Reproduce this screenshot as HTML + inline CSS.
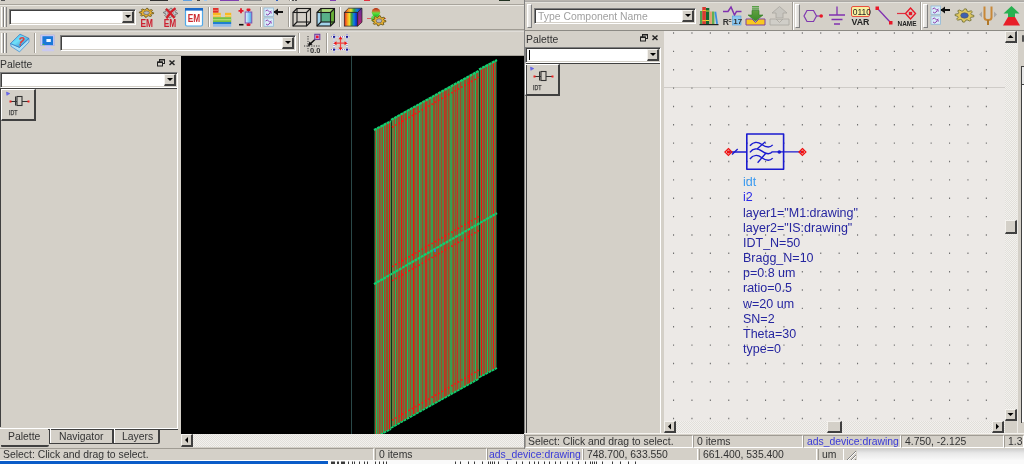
<!DOCTYPE html><html><head><meta charset="utf-8"><style>
html,body{margin:0;padding:0}
body{width:1024px;height:464px;overflow:hidden;position:relative;background:#d4d0c8;font-family:"Liberation Sans",sans-serif}
div{position:absolute;box-sizing:content-box}
.t{white-space:nowrap;line-height:1;will-change:transform}
.cb{background:#fff;border-top:1px solid #808080;border-left:1px solid #808080;border-bottom:1px solid #fff;border-right:1px solid #fff;box-shadow:inset 1px 1px 0 #404040, inset -1px -1px 0 #d4d0c8;padding:1px}
.rs{background:#d4d0c8;border-top:1px solid #f4f2ee;border-left:1px solid #f4f2ee;border-bottom:2px solid #404040;border-right:2px solid #404040}
.arr{width:0;height:0;border-left:3px solid transparent;border-right:3px solid transparent;border-top:3px solid #000}
.hd{width:1px;border-left:1px solid #fff;border-right:1px solid #808080;}
.hd::after{content:"";position:absolute;left:2px;top:0;width:1px;height:100%;border-left:1px solid #fff;border-right:1px solid #808080}
svg{position:absolute;overflow:visible}
.t,svg{will-change:transform}
.sf{border-top:1px solid #a09c94;border-left:1px solid #a09c94;border-bottom:1px solid #fff;border-right:1px solid #fff}
</style></head><body>

<div style="left:150px;top:0px;width:18px;height:1px;background:#303030"></div>
<div style="left:183px;top:0px;width:9px;height:1px;background:#60a0e0"></div>
<div style="left:197px;top:0px;width:3px;height:1px;background:#404040"></div>
<div style="left:204px;top:0px;width:3px;height:1px;background:#a0c8f0"></div>
<div style="left:220px;top:0px;width:19px;height:1px;background:#8040b0"></div>
<div style="left:244px;top:0px;width:18px;height:1px;background:#909090"></div>
<div style="left:276px;top:0px;width:2px;height:1px;background:#3060c0"></div>
<div style="left:289px;top:0px;width:1px;height:1px;background:#a09c94"></div>
<div style="left:290px;top:0px;width:1px;height:1px;background:#fff"></div>
<div style="left:292px;top:0px;width:2px;height:1px;background:#505050"></div>
<div style="left:295px;top:0px;width:2px;height:1px;background:#505050"></div>
<div style="left:330px;top:0px;width:6px;height:1px;background:#8040b0"></div>
<div style="left:364px;top:0px;width:6px;height:1px;background:#e03040"></div>
<div style="left:499px;top:0px;width:11px;height:1px;background:#203020"></div>
<div style="left:1px;top:0px;width:4px;height:1px;background:#555"></div>
<div style="left:0px;top:4px;width:857px;height:1px;background:#a8a49c"></div>
<div style="left:0px;top:5px;width:857px;height:1px;background:#eceae4"></div>
<div class="hd" style="left:1px;top:7px;height:20px"></div>
<div class="cb" style="left:9px;top:9px;width:123px;height:12px"></div>
<div class="rs" style="left:122px;top:11px;width:9px;height:9px"></div>
<div class="arr" style="left:125px;top:15px"></div>
<svg style="left:138px;top:7px" width="17" height="21" viewBox="0 0 17 21"><polygon points="15.70,5.80 15.56,6.67 13.29,7.03 12.81,7.59 13.59,8.96 12.50,9.51 10.48,8.77 9.51,8.95 8.50,10.26 7.10,10.18 6.52,8.77 5.62,8.47 3.41,8.96 2.51,8.28 3.71,7.03 3.42,6.43 1.30,5.80 1.44,4.93 3.71,4.57 4.19,4.01 3.41,2.64 4.50,2.09 6.52,2.83 7.49,2.65 8.50,1.34 9.90,1.42 10.48,2.83 11.38,3.13 13.59,2.64 14.49,3.32 13.29,4.57 13.58,5.17" fill="#e8b030" stroke="#5a4a10" stroke-width="0.8"/><ellipse cx="8.5" cy="5.8" rx="2.8800000000000003" ry="1.7856000000000003" fill="#b8b8c0" stroke="#555" stroke-width="0.6"/><text x="2.4" y="19.5" font-family="Liberation Sans" font-weight="bold" font-size="10" fill="#cc2030" textLength="12.5" lengthAdjust="spacingAndGlyphs">EM</text></svg>
<svg style="left:162px;top:7px" width="17" height="21" viewBox="0 0 17 21"><polygon points="15.50,6.00 15.37,6.93 13.16,7.31 12.69,7.90 13.45,9.37 12.39,9.96 10.43,9.17 9.48,9.36 8.50,10.76 7.13,10.67 6.57,9.17 5.70,8.85 3.55,9.37 2.68,8.64 3.84,7.31 3.56,6.67 1.50,6.00 1.63,5.07 3.84,4.69 4.31,4.10 3.55,2.63 4.61,2.04 6.57,2.83 7.52,2.64 8.50,1.24 9.87,1.33 10.43,2.83 11.30,3.15 13.45,2.63 14.32,3.36 13.16,4.69 13.44,5.33" fill="#c8c8cc" stroke="#666" stroke-width="0.8"/><ellipse cx="8.5" cy="6" rx="2.8000000000000003" ry="1.9040000000000004" fill="#e8e8e8" stroke="#555" stroke-width="0.6"/><path d="M4 1.8Q9 6 12.5 11M13.5 1.2Q8 5 4.5 11.5" stroke="#d0202a" stroke-width="2.2" fill="none"/><text x="1.8" y="19.5" font-family="Liberation Sans" font-weight="bold" font-size="10" fill="#cc2030" textLength="12.5" lengthAdjust="spacingAndGlyphs">EM</text></svg>
<svg style="left:184px;top:7px" width="20" height="21" viewBox="0 0 20 21"><rect x="1.5" y="1.5" width="17" height="17.5" rx="1.5" fill="#fff" stroke="#50a8e8" stroke-width="1.2"/><rect x="1" y="1" width="18" height="2.6" fill="#1868c8"/><text x="3.8" y="15.2" font-family="Liberation Sans" font-weight="bold" font-size="10.5" fill="#cc2a30" textLength="12.4" lengthAdjust="spacingAndGlyphs">EM</text></svg>
<svg style="left:213px;top:8px" width="19" height="19" viewBox="0 0 19 19"><rect x="0" y="0" width="5.5" height="4.8" fill="#e0302a"/><rect x="0" y="1.8" width="5.5" height="1.2" fill="#f06860"/><rect x="0" y="4.8" width="7.8" height="4.4" fill="#f8b820"/><rect x="12" y="4.8" width="6.2" height="4.4" fill="#f8b820"/><rect x="0" y="7" width="7.8" height="1.6" fill="#f8d070"/><rect x="12" y="7" width="6.2" height="1.6" fill="#f8d070"/><rect x="0" y="9.2" width="18.2" height="4.8" fill="#78c040"/><rect x="0" y="11" width="18.2" height="1.4" fill="#b0d870"/><rect x="0" y="14" width="18.2" height="2" fill="#2080d0"/><rect x="0" y="16" width="18.2" height="2.7" fill="#90b8e8"/></svg>
<svg style="left:237px;top:7px" width="17" height="21" viewBox="0 0 17 21"><path d="M1.5 3.8h5M4 1.3v5" stroke="#e0182a" stroke-width="1.8"/><path d="M2 17.7h4.5" stroke="#111" stroke-width="1.6"/><defs><linearGradient id="rg" x1="0" x2="1"><stop offset="0" stop-color="#e8f6ff"/><stop offset="1" stop-color="#40a8e8"/></linearGradient></defs><path d="M11.5 3v16" stroke="#8040a0" stroke-width="1"/><rect x="8.2" y="5" width="6.6" height="11" fill="url(#rg)" stroke="#8050b0" stroke-width="1"/><rect x="9.5" y="1.5" width="4" height="2.6" rx="1" fill="#e0182a"/><rect x="9.5" y="16.5" width="4" height="2.6" rx="1" fill="#e0182a"/></svg>
<svg style="left:263px;top:7px" width="21" height="21" viewBox="0 0 21 21"><rect x="1" y="1" width="9.5" height="8.3" fill="#d8ecf8" stroke="#90b8d8" stroke-width="0.8"/><path d="M2.5 4q2 -2 3 0t3 0M3 7q2 2 3 0t3 -1" stroke="#9040b0" stroke-width="1" fill="none"/><rect x="1" y="11" width="9.5" height="8.3" fill="#d8ecf8" stroke="#90b8d8" stroke-width="0.8"/><path d="M2.5 14q2 -2 3 0t3 0M3 17q2 2 3 0t3 -1" stroke="#9040b0" stroke-width="1" fill="none"/><path d="M11 5H20" stroke="#111" stroke-width="2"/><path d="M10.5 5L15 1.5V8.5Z" fill="#111"/></svg>
<svg style="left:291px;top:7px" width="21" height="21" viewBox="0 0 21 21"><g fill="none" stroke="#1a1a1a" stroke-width="1.1"><rect x="2" y="5.5" width="13.5" height="13.5"/><rect x="6" y="1.5" width="13.5" height="13.5"/><path d="M2 5.5L6 1.5M15.5 5.5L19.5 1.5M15.5 19L19.5 15M2 19L6 15"/></g></svg>
<svg style="left:315px;top:7px" width="21" height="21" viewBox="0 0 21 21"><rect x="6" y="1.5" width="13.5" height="13.5" fill="#80c850"/><path d="M2 5.5L6 1.5H19.5L15.5 5.5Z" fill="#a8d878"/><path d="M15.5 5.5L19.5 1.5V15L15.5 19Z" fill="#68b038"/><rect x="2" y="5.5" width="13.5" height="13.5" fill="#9cd4ee" opacity="0.9"/><rect x="6" y="5.5" width="9.5" height="9.5" fill="#58b088"/><g fill="none" stroke="#1a1a1a" stroke-width="1.1"><rect x="2" y="5.5" width="13.5" height="13.5"/><rect x="6" y="1.5" width="13.5" height="13.5"/><path d="M2 5.5L6 1.5M15.5 5.5L19.5 1.5M15.5 19L19.5 15M2 19L6 15"/></g></svg>
<svg style="left:343px;top:7px" width="21" height="21" viewBox="0 0 21 21"><defs><linearGradient id="rb" x1="0" x2="1"><stop offset="0" stop-color="#e02020"/><stop offset="0.2" stop-color="#f89020"/><stop offset="0.38" stop-color="#f0e030"/><stop offset="0.55" stop-color="#30a040"/><stop offset="0.72" stop-color="#1080e0"/><stop offset="0.9" stop-color="#1030d0"/><stop offset="1" stop-color="#2a2a80"/></linearGradient><linearGradient id="pm" x1="0" y1="0" x2="0" y2="1"><stop offset="0" stop-color="#6030a0"/><stop offset="1" stop-color="#c02070"/></linearGradient></defs><path d="M1.3 5.4L5.6 1.2H19L14.7 5.4Z" fill="url(#rb)" stroke="#222" stroke-width="0.7"/><rect x="1.3" y="5.4" width="13.4" height="13.7" fill="url(#rb)" stroke="#222" stroke-width="0.7"/><path d="M14.7 5.4L19 1.2V15.2L14.7 19.1Z" fill="url(#pm)" stroke="#222" stroke-width="0.7"/></svg>
<svg style="left:366px;top:7px" width="21" height="21" viewBox="0 0 21 21"><defs><linearGradient id="bl" x1="0" y1="0" x2="0" y2="1"><stop offset="0" stop-color="#b02810"/><stop offset="0.35" stop-color="#d07030"/><stop offset="0.6" stop-color="#60e040"/><stop offset="1" stop-color="#20c020"/></linearGradient></defs><path d="M1 11.5H20" stroke="#e04040" stroke-width="0.8"/><ellipse cx="9.5" cy="11.5" rx="4.5" ry="3.5" fill="#40e040" opacity="0.8"/><circle cx="10" cy="5.2" r="4.2" fill="url(#bl)"/><polygon points="20.00,13.80 19.87,14.78 17.66,15.19 17.19,15.82 17.95,17.36 16.89,17.99 14.93,17.15 13.98,17.36 13.00,18.84 11.63,18.74 11.07,17.15 10.20,16.82 8.05,17.36 7.18,16.60 8.34,15.19 8.06,14.51 6.00,13.80 6.13,12.82 8.34,12.41 8.81,11.78 8.05,10.24 9.11,9.61 11.07,10.45 12.02,10.24 13.00,8.76 14.37,8.86 14.93,10.45 15.80,10.78 17.95,10.24 18.82,11.00 17.66,12.41 17.94,13.09" fill="#e8b030" stroke="#5a4a10" stroke-width="0.8"/><ellipse cx="13" cy="13.8" rx="2.8000000000000003" ry="2.016" fill="#b8b8c0" stroke="#555" stroke-width="0.6"/></svg>
<div style="left:208px;top:7px;width:1px;height:20px;background:#a09c94"></div>
<div style="left:209px;top:7px;width:1px;height:20px;background:#fff"></div>
<div style="left:260px;top:7px;width:1px;height:20px;background:#a09c94"></div>
<div style="left:261px;top:7px;width:1px;height:20px;background:#fff"></div>
<div style="left:288px;top:7px;width:1px;height:20px;background:#a09c94"></div>
<div style="left:289px;top:7px;width:1px;height:20px;background:#fff"></div>
<div style="left:339px;top:7px;width:1px;height:20px;background:#a09c94"></div>
<div style="left:340px;top:7px;width:1px;height:20px;background:#fff"></div>
<div style="left:0px;top:29px;width:524px;height:1px;background:#a09c94"></div>
<div style="left:0px;top:30px;width:524px;height:1px;background:#c8c6c0"></div>
<div style="left:0px;top:31px;width:524px;height:1px;background:#e0ddd8"></div>
<div class="hd" style="left:1px;top:33px;height:20px"></div>
<div style="left:34px;top:33px;width:1px;height:20px;background:#a09c94"></div>
<div style="left:35px;top:33px;width:1px;height:20px;background:#fff"></div>
<div class="cb" style="left:60px;top:35px;width:232px;height:12px"></div>
<div class="rs" style="left:282px;top:37px;width:9px;height:9px"></div>
<div class="arr" style="left:285px;top:41px"></div>
<svg style="left:9px;top:33px" width="22" height="21" viewBox="0 0 22 21"><defs><linearGradient id="bk" x1="0" y1="0" x2="1" y2="1"><stop offset="0" stop-color="#40b8f0"/><stop offset="0.45" stop-color="#70e0f8"/><stop offset="1" stop-color="#1a68c0"/></linearGradient></defs><path d="M1.5 10.5L2 13.3L10.5 18.9L20 9L20 5.4L10.5 14.4Z" fill="#b0e0f4" stroke="#3a88d0" stroke-width="0.7"/><path d="M1.5 10.5L11 1.2L20 5.4L10.5 14.4Z" fill="url(#bk)" stroke="#2a70c0" stroke-width="0.7"/><path d="M10.5 6.5q1.5 -2.5 3.8 -1.5q1.6 1.2 -1 3q-1.6 1 -1.9 2.5" stroke="#e04040" stroke-width="1.6" fill="none"/><circle cx="11.2" cy="11.8" r="0.9" fill="#e04040"/></svg>
<svg style="left:40px;top:33px" width="17" height="21" viewBox="0 0 17 21"><rect x="0.8" y="2" width="13.4" height="10.7" fill="#d0d0f8" stroke="#a8a8e0" stroke-width="0.6"/><rect x="2.4" y="3.2" width="10.7" height="8.9" fill="#1a78d8"/><rect x="6.4" y="6" width="4.4" height="3" fill="#f0f8ff"/><rect x="2.6" y="11" width="1.6" height="1" fill="#40c040"/><path d="M5.2 12.7h5.6v2.8h-5.6z" fill="#c8c8f0"/><rect x="1.9" y="16" width="12.3" height="2.3" rx="1" fill="#c8c8f0"/></svg>
<svg style="left:303px;top:33px" width="19" height="21" viewBox="0 0 19 21"><path d="M5 3v16" stroke="#333" stroke-width="1" stroke-dasharray="1.2 1.2"/><path d="M1 13h16" stroke="#333" stroke-width="1" stroke-dasharray="1.2 1.2"/><path d="M6 12L13 5.5" stroke="#111" stroke-width="1.6"/><path d="M5 13L6.5 8.5L9.5 11.5Z" fill="#111"/><rect x="11.8" y="1.3" width="5" height="5.2" fill="#c8b8e0" stroke="#7040a0" stroke-width="1.1"/><rect x="13" y="2.6" width="2.6" height="2.6" fill="#f01830"/><text x="7" y="19.5" font-family="Liberation Sans" font-weight="bold" font-size="7.5" fill="#333">0.0</text></svg>
<svg style="left:330px;top:33px" width="21" height="21" viewBox="0 0 21 21"><g stroke="#fff" stroke-width="1.2"><path d="M1 3.8h19M1 16.6h19M4 1v19M17 1v19"/></g><g stroke="#5050c8" stroke-width="0.9" stroke-dasharray="1 1.2"><path d="M1 3.8h19M1 16.6h19M4 1v19M17 1v19"/></g><g fill="#1a1a90"><rect x="3" y="2.8" width="2" height="2"/><rect x="16" y="2.8" width="2" height="2"/><rect x="3" y="15.6" width="2" height="2"/><rect x="16" y="15.6" width="2" height="2"/></g><path d="M10.5 5v11M5 10.2h11" stroke="#f04040" stroke-width="1.2"/><path d="M10.5 3.2L8.5 6.2H12.5Z M10.5 17.5L8.5 14.5H12.5Z M3.5 10.2L6.5 8.2V12.2Z M17.5 10.2L14.5 8.2V12.2Z" fill="#f01818"/></svg>
<div style="left:298px;top:33px;width:1px;height:20px;background:#a09c94"></div>
<div style="left:299px;top:33px;width:1px;height:20px;background:#fff"></div>
<div style="left:326px;top:33px;width:1px;height:20px;background:#a09c94"></div>
<div style="left:327px;top:33px;width:1px;height:20px;background:#fff"></div>
<div style="left:0px;top:55px;width:524px;height:1px;background:#a8a49c"></div>
<div class="t" style="left:0.40px;top:59.70px;font-size:10.4px;color:#333;">Palette</div>
<svg style="left:156px;top:58px" width="10" height="9" viewBox="0 0 10 9"><rect x="3.5" y="1.5" width="5" height="4" fill="none" stroke="#222" stroke-width="1"/><rect x="3.5" y="1" width="5" height="1.5" fill="#222"/><rect x="1.5" y="4" width="5" height="4" fill="#d4d0c8" stroke="#222" stroke-width="1"/><rect x="1.5" y="3.5" width="5" height="1.5" fill="#222"/></svg>
<svg style="left:168px;top:59px" width="8" height="7" viewBox="0 0 8 7"><path d="M1.5 1.5L6.5 6M6.5 1.5L1.5 6" stroke="#222" stroke-width="1.5"/></svg>
<div class="cb" style="left:0px;top:72px;width:174px;height:12px"></div>
<div class="rs" style="left:164px;top:74px;width:9px;height:9px"></div>
<div class="arr" style="left:167px;top:78px"></div>
<div style="left:0px;top:88px;width:177px;height:1px;background:#404040"></div>
<div style="left:0px;top:88px;width:1px;height:339px;background:#404040"></div>
<div style="left:177px;top:88px;width:1px;height:341px;background:#fff"></div>
<div style="left:0px;top:428px;width:178px;height:1px;background:#fff"></div>
<div style="left:1px;top:89px;width:32px;height:29px;border-top:1px solid #fff;border-left:1px solid #fff;border-right:2px solid #404040;border-bottom:2px solid #404040"></div>
<svg style="left:1px;top:89px" width="35" height="31" viewBox="0 0 35 31"><path d="M5.5 3L8.8 4.6L5.8 6.3Z" fill="#6a6af0" stroke="#5050e0" stroke-width="0.5"/><path d="M10 12.5H27" stroke="#333" stroke-width="1"/><rect x="14" y="7.5" width="1.2" height="9" fill="#333"/><rect x="16" y="7.5" width="5" height="9" fill="#d4d0c8" stroke="#333" stroke-width="1.1"/><rect x="8.5" y="11.5" width="2" height="2" fill="#f02020"/><rect x="26.5" y="11.5" width="2" height="2" fill="#f02020"/><text x="8" y="25.5" font-family="Liberation Sans" font-size="7.4" fill="#333" stroke="#333" stroke-width="0.25" textLength="8.5" lengthAdjust="spacingAndGlyphs">IDT</text></svg>
<div style="left:0px;top:428px;width:178px;height:1px;background:#fff"></div>
<div style="left:48px;top:429px;width:130px;height:1px;background:#404040"></div>
<div style="left:1px;top:429px;width:48px;height:16px;border-bottom:2px solid #404040;border-bottom-right-radius:2px;border-bottom-left-radius:1px"></div>
<div class="t" style="left:8.40px;top:432.40px;font-size:10.4px;color:#333;">Palette</div>
<div style="left:49px;top:429px;width:62px;height:14px;border:1px solid #404040;border-top:0;border-right-width:2px;border-bottom-width:1px;border-bottom-right-radius:2px;box-shadow:inset 1px 0 0 #fff"></div>
<div class="t" style="left:59.00px;top:432.40px;font-size:10.4px;color:#333;">Navigator</div>
<div style="left:113px;top:429px;width:44px;height:14px;border:1px solid #404040;border-top:0;border-right-width:2px;border-bottom-width:1px;border-bottom-right-radius:2px;box-shadow:inset 1px 0 0 #fff"></div>
<div class="t" style="left:121.70px;top:432.40px;font-size:10.4px;color:#333;">Layers</div>
<div style="left:181px;top:56px;width:343px;height:378px;background:#000"></div>
<div style="left:351px;top:56px;width:1px;height:378px;background:#2a4848"></div>
<svg style="left:181px;top:56px" width="343" height="378" viewBox="181 56 343 378">
<defs><clipPath id="pg"><polygon points="374,129.7 391,120.8 391,119.6 479,70.4 479,69.2 497,59.8 497,367.8 479,377.2 479,378.4 391,427.6 391,428.8 374,437.7"/></clipPath></defs>
<g clip-path="url(#pg)">
<rect x="374" y="56" width="1" height="378" fill="#0a5030"/>
<rect x="375" y="56" width="1" height="378" fill="#a04a28"/>
<rect x="376" y="56" width="1" height="378" fill="#14c060"/>
<rect x="377" y="56" width="1" height="378" fill="#7a6a38"/>
<rect x="378" y="56" width="1" height="378" fill="#5a8045"/>
<rect x="379" y="56" width="1" height="378" fill="#a04a28"/>
<rect x="380" y="56" width="1" height="378" fill="#7a6a38"/>
<rect x="381" y="56" width="1" height="378" fill="#5a8045"/>
<rect x="382" y="56" width="1" height="378" fill="#a04a28"/>
<rect x="383" y="56" width="1" height="378" fill="#14c060"/>
<rect x="384" y="56" width="1" height="378" fill="#a04a28"/>
<rect x="385" y="56" width="1" height="378" fill="#5a8045"/>
<rect x="386" y="56" width="1" height="378" fill="#a04a28"/>
<rect x="387" y="56" width="1" height="378" fill="#a04a28"/>
<rect x="388" y="56" width="1" height="378" fill="#5a8045"/>
<rect x="389" y="56" width="1" height="378" fill="#f01010"/>
<rect x="390" y="56" width="1" height="378" fill="#5a8045"/>
<rect x="391" y="56" width="1" height="378" fill="#003a18"/>
<rect x="392" y="56" width="1" height="378" fill="#6a7a40"/>
<rect x="393" y="56" width="1" height="378" fill="#6a7a40"/>
<rect x="394" y="56" width="1" height="378" fill="#a04a28"/>
<rect x="395" y="56" width="1" height="378" fill="#14c060"/>
<rect x="396" y="56" width="1" height="378" fill="#a04a28"/>
<rect x="397" y="56" width="1" height="378" fill="#5a8045"/>
<rect x="398" y="56" width="1" height="378" fill="#a04a28"/>
<rect x="399" y="56" width="1" height="378" fill="#a04a28"/>
<rect x="400" y="56" width="1" height="378" fill="#5a8045"/>
<rect x="401" y="56" width="1" height="378" fill="#f01010"/>
<rect x="402" y="56" width="1" height="378" fill="#7a6a38"/>
<rect x="403" y="56" width="1" height="378" fill="#a04a28"/>
<rect x="404" y="56" width="1" height="378" fill="#5a8045"/>
<rect x="405" y="56" width="1" height="378" fill="#a04a28"/>
<rect x="406" y="56" width="1" height="378" fill="#a04a28"/>
<rect x="407" y="56" width="1" height="378" fill="#14c060"/>
<rect x="408" y="56" width="1" height="378" fill="#7a6a38"/>
<rect x="409" y="56" width="1" height="378" fill="#5a8045"/>
<rect x="410" y="56" width="1" height="378" fill="#a04a28"/>
<rect x="411" y="56" width="1" height="378" fill="#5a8045"/>
<rect x="412" y="56" width="1" height="378" fill="#5a8045"/>
<rect x="413" y="56" width="1" height="378" fill="#f01010"/>
<rect x="414" y="56" width="1" height="378" fill="#a04a28"/>
<rect x="415" y="56" width="1" height="378" fill="#7a6a38"/>
<rect x="416" y="56" width="1" height="378" fill="#5a8045"/>
<rect x="417" y="56" width="1" height="378" fill="#a04a28"/>
<rect x="418" y="56" width="1" height="378" fill="#a04a28"/>
<rect x="419" y="56" width="1" height="378" fill="#14c060"/>
<rect x="420" y="56" width="1" height="378" fill="#5a8045"/>
<rect x="421" y="56" width="1" height="378" fill="#5a8045"/>
<rect x="422" y="56" width="1" height="378" fill="#a04a28"/>
<rect x="423" y="56" width="1" height="378" fill="#5a8045"/>
<rect x="424" y="56" width="1" height="378" fill="#5a8045"/>
<rect x="425" y="56" width="1" height="378" fill="#c83020"/>
<rect x="426" y="56" width="1" height="378" fill="#c83020"/>
<rect x="427" y="56" width="1" height="378" fill="#7a6a38"/>
<rect x="428" y="56" width="1" height="378" fill="#5a8045"/>
<rect x="429" y="56" width="1" height="378" fill="#a04a28"/>
<rect x="430" y="56" width="1" height="378" fill="#7a6a38"/>
<rect x="431" y="56" width="1" height="378" fill="#34a050"/>
<rect x="432" y="56" width="1" height="378" fill="#34a050"/>
<rect x="433" y="56" width="1" height="378" fill="#a04a28"/>
<rect x="434" y="56" width="1" height="378" fill="#a04a28"/>
<rect x="435" y="56" width="1" height="378" fill="#5a8045"/>
<rect x="436" y="56" width="1" height="378" fill="#a04a28"/>
<rect x="437" y="56" width="1" height="378" fill="#7a6a38"/>
<rect x="438" y="56" width="1" height="378" fill="#c83020"/>
<rect x="439" y="56" width="1" height="378" fill="#5a8045"/>
<rect x="440" y="56" width="1" height="378" fill="#5a8045"/>
<rect x="441" y="56" width="1" height="378" fill="#a04a28"/>
<rect x="442" y="56" width="1" height="378" fill="#5a8045"/>
<rect x="443" y="56" width="1" height="378" fill="#5a8045"/>
<rect x="444" y="56" width="1" height="378" fill="#c83020"/>
<rect x="445" y="56" width="1" height="378" fill="#a04a28"/>
<rect x="446" y="56" width="1" height="378" fill="#a04a28"/>
<rect x="447" y="56" width="1" height="378" fill="#5a8045"/>
<rect x="448" y="56" width="1" height="378" fill="#a04a28"/>
<rect x="449" y="56" width="1" height="378" fill="#7a6a38"/>
<rect x="450" y="56" width="1" height="378" fill="#34a050"/>
<rect x="451" y="56" width="1" height="378" fill="#34a050"/>
<rect x="452" y="56" width="1" height="378" fill="#7a6a38"/>
<rect x="453" y="56" width="1" height="378" fill="#a04a28"/>
<rect x="454" y="56" width="1" height="378" fill="#5a8045"/>
<rect x="455" y="56" width="1" height="378" fill="#a04a28"/>
<rect x="456" y="56" width="1" height="378" fill="#7a6a38"/>
<rect x="457" y="56" width="1" height="378" fill="#c83020"/>
<rect x="458" y="56" width="1" height="378" fill="#5a8045"/>
<rect x="459" y="56" width="1" height="378" fill="#5a8045"/>
<rect x="460" y="56" width="1" height="378" fill="#a04a28"/>
<rect x="461" y="56" width="1" height="378" fill="#5a8045"/>
<rect x="462" y="56" width="1" height="378" fill="#5a8045"/>
<rect x="463" y="56" width="1" height="378" fill="#34a050"/>
<rect x="464" y="56" width="1" height="378" fill="#a04a28"/>
<rect x="465" y="56" width="1" height="378" fill="#a04a28"/>
<rect x="466" y="56" width="1" height="378" fill="#5a8045"/>
<rect x="467" y="56" width="1" height="378" fill="#a04a28"/>
<rect x="468" y="56" width="1" height="378" fill="#a04a28"/>
<rect x="469" y="56" width="1" height="378" fill="#f01010"/>
<rect x="470" y="56" width="1" height="378" fill="#5a8045"/>
<rect x="471" y="56" width="1" height="378" fill="#7a6a38"/>
<rect x="472" y="56" width="1" height="378" fill="#a04a28"/>
<rect x="473" y="56" width="1" height="378" fill="#5a8045"/>
<rect x="474" y="56" width="1" height="378" fill="#7a6a38"/>
<rect x="475" y="56" width="1" height="378" fill="#14c060"/>
<rect x="476" y="56" width="1" height="378" fill="#a04a28"/>
<rect x="477" y="56" width="1" height="378" fill="#a04a28"/>
<rect x="478" y="56" width="1" height="378" fill="#5a8045"/>
<rect x="479" y="56" width="1" height="378" fill="#003a18"/>
<rect x="480" y="56" width="1" height="378" fill="#5a8045"/>
<rect x="481" y="56" width="1" height="378" fill="#f01010"/>
<rect x="482" y="56" width="1" height="378" fill="#5a8045"/>
<rect x="483" y="56" width="1" height="378" fill="#a04a28"/>
<rect x="484" y="56" width="1" height="378" fill="#a04a28"/>
<rect x="485" y="56" width="1" height="378" fill="#5a8045"/>
<rect x="486" y="56" width="1" height="378" fill="#a04a28"/>
<rect x="487" y="56" width="1" height="378" fill="#14c060"/>
<rect x="488" y="56" width="1" height="378" fill="#a04a28"/>
<rect x="489" y="56" width="1" height="378" fill="#5a8045"/>
<rect x="490" y="56" width="1" height="378" fill="#5a8045"/>
<rect x="491" y="56" width="1" height="378" fill="#a04a28"/>
<rect x="492" y="56" width="1" height="378" fill="#5a8045"/>
<rect x="493" y="56" width="1" height="378" fill="#f01010"/>
<rect x="494" y="56" width="1" height="378" fill="#5a8045"/>
<rect x="495" y="56" width="1" height="378" fill="#a04a28"/>
<rect x="496" y="56" width="1" height="378" fill="#0a5030"/>
</g>
<line x1="374" y1="284.09" x2="497" y2="213.12" stroke="#10d070" stroke-width="2.2" stroke-dasharray="3 0.6"/>
<line x1="374" y1="130.0" x2="391" y2="121.1" stroke="#10d070" stroke-width="2.2" stroke-dasharray="3 0.6"/>
<line x1="391" y1="119.89999999999999" x2="479" y2="70.7" stroke="#10d070" stroke-width="2.2" stroke-dasharray="3 0.6"/>
<line x1="479" y1="69.5" x2="497" y2="60.099999999999994" stroke="#10d070" stroke-width="2.2" stroke-dasharray="3 0.6"/>
<line x1="374" y1="438.0" x2="391" y2="429.1" stroke="#10d070" stroke-width="1.7" stroke-dasharray="3 0.6"/>
<line x1="391" y1="427.90000000000003" x2="479" y2="378.7" stroke="#10d070" stroke-width="1.7" stroke-dasharray="3 0.6"/>
<line x1="479" y1="377.5" x2="497" y2="368.1" stroke="#10d070" stroke-width="1.7" stroke-dasharray="3 0.6"/>
<line x1="392" y1="127.30" x2="479" y2="77.10" stroke="#ff1010" stroke-width="1.6" stroke-dasharray="1.6 2.2"/>
<line x1="392" y1="266.70" x2="479" y2="216.50" stroke="#ff1010" stroke-width="1.6" stroke-dasharray="1.6 2.2"/>
<line x1="392" y1="280.70" x2="479" y2="230.50" stroke="#ff1010" stroke-width="1.6" stroke-dasharray="1.6 2.2"/>
<line x1="392" y1="420.30" x2="479" y2="370.10" stroke="#ff1010" stroke-width="1.6" stroke-dasharray="1.6 2.2"/>
<rect x="434" y="249" width="2" height="3" fill="#2a8ad0"/>
</svg>
<div style="left:181px;top:434px;width:343px;height:13px;background:repeating-conic-gradient(#e2dfda 0 25%, #f2f1ee 0 50%) 0 0/2px 2px"></div>
<div class="rs" style="left:181px;top:434px;width:9px;height:10px"></div>
<svg style="left:0;top:0" width="1024" height="464"><path d="M188.0 437L185.0 440L188.0 443Z" fill="#000"/></svg>
<div class="sf" style="left:-1px;top:448px;width:373px;height:11px"></div>
<div class="sf" style="left:375px;top:448px;width:110px;height:11px"></div>
<div class="sf" style="left:487px;top:448px;width:94px;height:11px"></div>
<div class="sf" style="left:583px;top:448px;width:113px;height:11px"></div>
<div class="sf" style="left:699px;top:448px;width:116px;height:11px"></div>
<div class="sf" style="left:818px;top:448px;width:24px;height:11px"></div>
<div class="t" style="left:3.00px;top:450.00px;font-size:10.4px;color:#333;">Select: Click and drag to select.</div>
<div class="t" style="left:378.90px;top:450.00px;font-size:10.4px;color:#333;">0 items</div>
<div class="t" style="left:489.10px;top:450.00px;font-size:10.4px;color:#3a3ad8;">ads_device:drawing</div>
<div class="t" style="left:587.40px;top:450.00px;font-size:10.4px;color:#333;">748.700, 633.550</div>
<div class="t" style="left:703.40px;top:450.00px;font-size:10.4px;color:#333;">661.400, 535.400</div>
<div class="t" style="left:822.40px;top:450.00px;font-size:10.4px;color:#333;">um</div>
<svg style="left:845px;top:449px" width="12" height="12" viewBox="0 0 12 12"><g stroke="#808080" stroke-width="1"><path d="M11 2L2 11M11 6L6 11M11 10L10 11"/></g><g stroke="#fff" stroke-width="1"><path d="M11 3L3 11M11 7L7 11"/></g></svg>
<div style="left:857px;top:448px;width:167px;height:16px;background:linear-gradient(#c8c8c8,#e8e8e8 5px,#f8f8f8 12px)"></div>
<div style="left:0px;top:461px;width:328px;height:3px;background:#0a5cc8"></div>
<div style="left:328px;top:460px;width:696px;height:4px;background:#fafafa"></div>
<svg style="left:0;top:0" width="1024" height="464"><path fill="#3a3a3a" d="M331 461.5h1v3h-1zM332 461.5h1v3h-1zM333 461.5h1v3h-1zM334 461.5h1v3h-1zM337 461.5h1v3h-1zM338 461.5h1v3h-1zM341 461.5h1v3h-1zM342 461.5h1v3h-1zM343 461.5h1v3h-1zM344 461.5h1v3h-1zM348 461.5h1v3h-1zM352 461.5h1v3h-1zM354 461.5h1v3h-1zM359 461.5h1v3h-1zM364 461.5h1v3h-1zM367 461.5h1v3h-1zM375 461.5h1v3h-1zM379 461.5h1v3h-1zM383 461.5h1v3h-1zM386 461.5h1v3h-1zM455 461.5h1v3h-1zM460 461.5h1v3h-1zM468 461.5h1v3h-1zM474 461.5h1v3h-1zM482 461.5h1v3h-1zM488 461.5h1v3h-1zM490 461.5h1v3h-1zM492 461.5h1v3h-1zM494 461.5h1v3h-1zM498 461.5h1v3h-1zM507 461.5h1v3h-1zM516 461.5h1v3h-1zM522 461.5h1v3h-1zM529 461.5h1v3h-1zM534 461.5h1v3h-1zM538 461.5h1v3h-1zM544 461.5h1v3h-1zM549 461.5h1v3h-1zM555 461.5h1v3h-1zM560 461.5h1v3h-1zM567 461.5h1v3h-1zM572 461.5h1v3h-1zM578 461.5h1v3h-1zM585 461.5h1v3h-1zM590 461.5h1v3h-1zM592 461.5h1v3h-1zM594 461.5h1v3h-1zM596 461.5h1v3h-1zM602 461.5h1v3h-1zM612 461.5h1v3h-1zM620 461.5h1v3h-1zM628 461.5h1v3h-1zM635 461.5h1v3h-1z"/></svg>
<div style="left:524px;top:0px;width:500px;height:449px;background:#d4d0c8"></div>
<div style="left:524px;top:0px;width:500px;height:1px;background:#b8b4ae"></div>
<div style="left:524px;top:1px;width:500px;height:1px;background:#acaaa6"></div>
<div style="left:524px;top:2px;width:500px;height:1px;background:#e4e2dc"></div>
<div style="left:524px;top:0px;width:1px;height:449px;background:#808080"></div>
<div style="left:527px;top:4px;width:3px;height:22px;border-left:1px solid #fff;border-top:1px solid #fff;border-right:1px solid #808080;border-bottom:1px solid #808080;background:linear-gradient(90deg,#f0efec,#d8d6d2)"></div>
<div class="cb" style="left:534px;top:8px;width:158px;height:12px"></div>
<div class="rs" style="left:682px;top:10px;width:9px;height:9px"></div>
<div class="arr" style="left:685px;top:14px"></div>
<div class="t" style="left:537.70px;top:11.90px;font-size:10.4px;color:#a0a0a0;">Type Component Name</div>
<div style="left:792px;top:2px;width:1px;height:28px;background:#a09c94"></div>
<div style="left:793px;top:2px;width:1px;height:28px;background:#fff"></div>
<div style="left:795px;top:4px;width:3px;height:22px;border-left:1px solid #fff;border-top:1px solid #fff;border-right:1px solid #808080;border-bottom:1px solid #808080;background:linear-gradient(90deg,#f0efec,#d8d6d2)"></div>
<div style="left:920px;top:2px;width:1px;height:28px;background:#a09c94"></div>
<div style="left:921px;top:2px;width:1px;height:28px;background:#fff"></div>
<div style="left:923px;top:4px;width:3px;height:22px;border-left:1px solid #fff;border-top:1px solid #fff;border-right:1px solid #808080;border-bottom:1px solid #808080;background:linear-gradient(90deg,#f0efec,#d8d6d2)"></div>
<div style="left:524px;top:30px;width:500px;height:1px;background:#8c8a84"></div>
<svg style="left:699px;top:6px" width="20" height="20" viewBox="0 0 20 20"><rect x="1" y="5" width="2.5" height="13" fill="#50a050"/><rect x="3.3" y="1" width="3.6" height="17" fill="#d83a30"/><rect x="3.3" y="4" width="3.6" height="1" fill="#f0c030"/><rect x="3.3" y="14" width="3.6" height="1.2" fill="#f0c030"/><rect x="7" y="2" width="3.3" height="16" fill="#106830"/><rect x="7" y="4.5" width="3.3" height="1" fill="#e0e040"/><rect x="7" y="14" width="3.3" height="1" fill="#e0e040"/><rect x="10.5" y="5.5" width="2.4" height="12.5" fill="#e0a070"/><rect x="13" y="5.5" width="2.4" height="12.5" fill="#60b050"/><path d="M15.5 6L17.2 5.6L19 17.8L17.2 18Z" fill="#3a90e0"/><rect x="0.5" y="18" width="19" height="1.2" fill="#222"/></svg>
<svg style="left:722px;top:6px" width="21" height="20" viewBox="0 0 21 20"><path d="M1 5.5L6 5.5L9 1L12.5 9L14.5 5.5H19.5" stroke="#8030b0" stroke-width="1.5" fill="none"/><text x="0.8" y="18.5" font-family="Liberation Sans" font-weight="bold" font-size="8.5" fill="#333">R</text><rect x="6.8" y="13" width="2.5" height="1" fill="#555"/><rect x="6.8" y="15" width="2.5" height="1" fill="#555"/><rect x="10.5" y="10" width="8.5" height="9" fill="#8cc8f0" stroke="#50a0e0" stroke-width="0.6"/><text x="11.2" y="18" font-family="Liberation Sans" font-weight="bold" font-size="8" fill="#333">17</text></svg>
<svg style="left:745px;top:5px" width="21" height="21" viewBox="0 0 21 21"><defs><linearGradient id="ga" x1="0" y1="0" x2="0" y2="1"><stop offset="0" stop-color="#60a040"/><stop offset="1" stop-color="#3a8a28"/></linearGradient></defs><rect x="7" y="1" width="7" height="1.5" fill="#58a048"/><rect x="7" y="3.2" width="7" height="1.5" fill="#58a048"/><path d="M7 5.5H14V10H18L10.5 16L3 10H7Z" fill="url(#ga)" stroke="#2a7a20" stroke-width="0.6"/><path d="M1 14H7L10.5 17.5L14 14H20V20H1Z" fill="#f8c820" stroke="#8040a0" stroke-width="1"/></svg>
<svg style="left:769px;top:5px" width="21" height="21" viewBox="0 0 21 21"><path d="M10.5 1.5L18 8H14V13H7V8H3Z" fill="#c8c6c0" stroke="#a8a6a0" stroke-width="0.8"/><rect x="7" y="14" width="7" height="1" fill="#b8b6b0"/><path d="M1 14H7L10.5 17.5L14 14H20V20H1Z" fill="#d0cec8" stroke="#a8a6a0" stroke-width="0.8"/></svg>
<svg style="left:803px;top:6px" width="21" height="20" viewBox="0 0 21 20"><path d="M4 4.5H10.5L13.5 10L10.5 15.5H4L1 10Z" fill="none" stroke="#8038b0" stroke-width="1.2"/><path d="M13.5 10H17" stroke="#8038b0" stroke-width="1.2"/><circle cx="18.2" cy="10" r="1.8" fill="#e81828"/></svg>
<svg style="left:828px;top:5px" width="18" height="21" viewBox="0 0 18 21"><g stroke="#8030b0" stroke-width="1.3"><path d="M9 1.5V9.5M1 10h16M3.5 14.5h11M6 19h6"/></g></svg>
<svg style="left:850px;top:5px" width="21" height="21" viewBox="0 0 21 21"><rect x="1.5" y="1.5" width="18" height="10" rx="1.5" fill="#f8f0a0" stroke="#e85040" stroke-width="1"/><text x="2.8" y="10" font-family="Liberation Sans" font-size="8.5" fill="#222">0110</text><text x="1.5" y="20" font-family="Liberation Sans" font-weight="bold" font-size="8.8" fill="#222">VAR</text></svg>
<svg style="left:874px;top:5px" width="20" height="21" viewBox="0 0 20 21"><path d="M3.5 3.5L16.5 17.5" stroke="#8030b0" stroke-width="1.3"/><rect x="1.5" y="1.5" width="3.5" height="3.5" fill="#e81828"/><rect x="15" y="16" width="3.5" height="3.5" fill="#e81828"/></svg>
<svg style="left:896px;top:5px" width="22" height="21" viewBox="0 0 22 21"><path d="M1 8.5H9" stroke="#e03040" stroke-width="1.2"/><path d="M14.5 3L19.5 8.5L14.5 14L9.5 8.5Z" fill="none" stroke="#e81828" stroke-width="1.4"/><rect x="12.8" y="6.8" width="3.4" height="3.4" fill="#e81828"/><text x="1.5" y="20.5" font-family="Liberation Sans" font-weight="bold" font-size="6.6" fill="#222" textLength="19" lengthAdjust="spacingAndGlyphs">NAME</text></svg>
<svg style="left:930px;top:5px" width="21" height="21" viewBox="0 0 21 21"><rect x="1" y="1" width="9.5" height="8.3" fill="#d8ecf8" stroke="#90b8d8" stroke-width="0.8"/><path d="M2.5 4q2 -2 3 0t3 0M3 7q2 2 3 0t3 -1" stroke="#9040b0" stroke-width="1" fill="none"/><rect x="1" y="11" width="9.5" height="8.3" fill="#d8ecf8" stroke="#90b8d8" stroke-width="0.8"/><path d="M2.5 14q2 -2 3 0t3 0M3 17q2 2 3 0t3 -1" stroke="#9040b0" stroke-width="1" fill="none"/><path d="M11 5H20" stroke="#111" stroke-width="2"/><path d="M10.5 5L15 1.5V8.5Z" fill="#111"/></svg>
<svg style="left:954px;top:5px" width="21" height="21" viewBox="0 0 21 21"><polygon points="20.00,10.50 19.82,11.80 16.82,12.33 16.19,13.16 17.22,15.20 15.78,16.03 13.12,14.92 11.83,15.20 10.50,17.15 8.65,17.02 7.88,14.92 6.70,14.48 3.78,15.20 2.60,14.19 4.18,12.33 3.79,11.43 1.00,10.50 1.18,9.20 4.18,8.67 4.81,7.84 3.78,5.80 5.22,4.97 7.88,6.08 9.17,5.80 10.50,3.85 12.35,3.98 13.12,6.08 14.30,6.52 17.22,5.80 18.40,6.81 16.82,8.67 17.21,9.57" fill="#e0c860" stroke="#6a6a30" stroke-width="0.8"/><ellipse cx="10.5" cy="10.5" rx="3.8000000000000003" ry="2.66" fill="#4060b0" stroke="#555" stroke-width="0.6"/></svg>
<svg style="left:978px;top:5px" width="20" height="21" viewBox="0 0 20 21"><path d="M1 9.5L4 6.5V12.5Z M19 9.5L16 6.5V12.5Z" fill="#a8a8a8"/><path d="M6.5 1.5V12.5Q6.5 15 10 15Q13.5 15 13.5 12.5V1.5" stroke="#c88838" stroke-width="2" fill="none"/><path d="M10 15V20" stroke="#b07828" stroke-width="2"/></svg>
<svg style="left:1002px;top:5px" width="22" height="21" viewBox="0 0 22 21"><path d="M9.5 1L17.5 8.5H13V12H6V8.5H1.5Z" fill="#28b050"/><path d="M6 12H13L18 20.5H1Z" fill="#e81e28"/><path d="M4.5 12H14.5" stroke="#28b050" stroke-width="0"/></svg>
<div class="t" style="left:525.80px;top:34.80px;font-size:10.4px;color:#333;">Palette</div>
<svg style="left:639px;top:33px" width="10" height="9" viewBox="0 0 10 9"><rect x="3.5" y="1.5" width="5" height="4" fill="none" stroke="#222" stroke-width="1"/><rect x="3.5" y="1" width="5" height="1.5" fill="#222"/><rect x="1.5" y="4" width="5" height="4" fill="#d4d0c8" stroke="#222" stroke-width="1"/><rect x="1.5" y="3.5" width="5" height="1.5" fill="#222"/></svg>
<svg style="left:651px;top:34px" width="8" height="7" viewBox="0 0 8 7"><path d="M1.5 1.5L6.5 6M6.5 1.5L1.5 6" stroke="#222" stroke-width="1.5"/></svg>
<div class="cb" style="left:525px;top:47px;width:132px;height:12px"></div>
<div style="left:529px;top:50px;width:1px;height:10px;background:#000"></div>
<div class="rs" style="left:647px;top:49px;width:9px;height:9px"></div>
<div class="arr" style="left:650px;top:53px"></div>
<div style="left:526px;top:63px;width:134px;height:1px;background:#404040"></div>
<div style="left:526px;top:63px;width:1px;height:370px;background:#404040"></div>
<div style="left:660px;top:63px;width:1px;height:370px;background:#fff"></div>
<div style="left:525px;top:64px;width:32px;height:29px;border-top:1px solid #fff;border-left:1px solid #fff;border-right:2px solid #404040;border-bottom:2px solid #404040"></div>
<svg style="left:525px;top:64px" width="35" height="31" viewBox="0 0 35 31"><path d="M5.5 3L8.8 4.6L5.8 6.3Z" fill="#6a6af0" stroke="#5050e0" stroke-width="0.5"/><path d="M10 12.5H27" stroke="#333" stroke-width="1"/><rect x="14" y="7.5" width="1.2" height="9" fill="#333"/><rect x="16" y="7.5" width="5" height="9" fill="#d4d0c8" stroke="#333" stroke-width="1.1"/><rect x="8.5" y="11.5" width="2" height="2" fill="#f02020"/><rect x="26.5" y="11.5" width="2" height="2" fill="#f02020"/><text x="8" y="25.5" font-family="Liberation Sans" font-size="7.4" fill="#333" stroke="#333" stroke-width="0.25" textLength="8.5" lengthAdjust="spacingAndGlyphs">IDT</text></svg>
<div style="left:664px;top:31px;width:341px;height:390px;background:#ece9e6"></div>
<div style="left:1005px;top:31px;width:12px;height:390px;background:repeating-conic-gradient(#e2dfda 0 25%, #f2f1ee 0 50%) 0 0/2px 2px"></div>
<div style="left:664px;top:421px;width:341px;height:12px;background:repeating-conic-gradient(#e2dfda 0 25%, #f2f1ee 0 50%) 0 0/2px 2px"></div>
<div class="rs" style="left:1005px;top:31px;width:9px;height:9px"></div>
<svg style="left:0;top:0" width="1024" height="464"><path d="M1007.5 38.0L1010.5 35.0L1013.5 38.0Z" fill="#000"/></svg>
<div class="rs" style="left:1005px;top:409px;width:9px;height:9px"></div>
<svg style="left:0;top:0" width="1024" height="464"><path d="M1007.5 413.0L1010.5 416.0L1013.5 413.0Z" fill="#000"/></svg>
<div class="rs" style="left:664px;top:421px;width:9px;height:9px"></div>
<svg style="left:0;top:0" width="1024" height="464"><path d="M671.0 423.5L668.0 426.5L671.0 429.5Z" fill="#000"/></svg>
<div class="rs" style="left:992px;top:421px;width:9px;height:9px"></div>
<svg style="left:0;top:0" width="1024" height="464"><path d="M996.0 423.5L999.0 426.5L996.0 429.5Z" fill="#000"/></svg>
<div class="rs" style="left:827px;top:421px;width:12px;height:9px"></div>
<div class="rs" style="left:1005px;top:220px;width:9px;height:11px"></div>
<div style="left:1017px;top:31px;width:7px;height:402px;background:#d4d0c8"></div>
<div style="left:1017px;top:31px;width:1px;height:402px;background:#eceae6"></div>
<div style="left:1022px;top:35px;width:2px;height:7px;background:#505050;border-radius:1px"></div>
<div style="left:1021px;top:66px;width:1px;height:357px;background:#404040"></div>
<div style="left:1021px;top:66px;width:3px;height:1px;background:#404040"></div>
<div style="left:1022px;top:67px;width:2px;height:17px;background:#e8e8e8"></div>
<div style="left:1022px;top:84px;width:2px;height:1px;background:#404040"></div>
<div style="left:1022px;top:85px;width:2px;height:337px;background:#fff"></div>
<div style="left:524px;top:433px;width:500px;height:1px;background:#f4f2ee"></div>
<div class="sf" style="left:525px;top:435px;width:166px;height:11px"></div>
<div class="sf" style="left:693px;top:435px;width:108px;height:11px"></div>
<div class="sf" style="left:803px;top:435px;width:96px;height:11px"></div>
<div class="sf" style="left:901px;top:435px;width:101px;height:11px"></div>
<div class="sf" style="left:1004px;top:435px;width:18px;height:11px"></div>
<div class="t" style="left:528.40px;top:437.00px;font-size:10.4px;color:#333;">Select: Click and drag to select.</div>
<div class="t" style="left:696.90px;top:437.00px;font-size:10.4px;color:#333;">0 items</div>
<div class="t" style="left:807.30px;top:437.00px;font-size:10.4px;color:#3a3ad8;">ads_device:drawing</div>
<div class="t" style="left:905.40px;top:437.00px;font-size:10.4px;color:#333;">4.750, -2.125</div>
<div class="t" style="left:1008.40px;top:437.00px;font-size:10.4px;color:#333;">1.3</div>
<div style="left:664px;top:87px;width:341px;height:1px;background:#cfccc8"></div>
<svg style="left:0;top:0" width="1024" height="464"><path fill="#707070" d="M673.00 32.30h1.1v1.4h-1.1zM673.00 50.66h1.1v1.4h-1.1zM673.00 69.02h1.1v1.4h-1.1zM673.00 87.38h1.1v1.4h-1.1zM673.00 105.74h1.1v1.4h-1.1zM673.00 124.10h1.1v1.4h-1.1zM673.00 142.46h1.1v1.4h-1.1zM673.00 160.82h1.1v1.4h-1.1zM673.00 179.18h1.1v1.4h-1.1zM673.00 197.54h1.1v1.4h-1.1zM673.00 215.90h1.1v1.4h-1.1zM673.00 234.26h1.1v1.4h-1.1zM673.00 252.62h1.1v1.4h-1.1zM673.00 270.98h1.1v1.4h-1.1zM673.00 289.34h1.1v1.4h-1.1zM673.00 307.70h1.1v1.4h-1.1zM673.00 326.06h1.1v1.4h-1.1zM673.00 344.42h1.1v1.4h-1.1zM673.00 362.78h1.1v1.4h-1.1zM673.00 381.14h1.1v1.4h-1.1zM673.00 399.50h1.1v1.4h-1.1zM673.00 417.86h1.1v1.4h-1.1zM691.40 32.30h1.1v1.4h-1.1zM691.40 50.66h1.1v1.4h-1.1zM691.40 69.02h1.1v1.4h-1.1zM691.40 87.38h1.1v1.4h-1.1zM691.40 105.74h1.1v1.4h-1.1zM691.40 124.10h1.1v1.4h-1.1zM691.40 142.46h1.1v1.4h-1.1zM691.40 160.82h1.1v1.4h-1.1zM691.40 179.18h1.1v1.4h-1.1zM691.40 197.54h1.1v1.4h-1.1zM691.40 215.90h1.1v1.4h-1.1zM691.40 234.26h1.1v1.4h-1.1zM691.40 252.62h1.1v1.4h-1.1zM691.40 270.98h1.1v1.4h-1.1zM691.40 289.34h1.1v1.4h-1.1zM691.40 307.70h1.1v1.4h-1.1zM691.40 326.06h1.1v1.4h-1.1zM691.40 344.42h1.1v1.4h-1.1zM691.40 362.78h1.1v1.4h-1.1zM691.40 381.14h1.1v1.4h-1.1zM691.40 399.50h1.1v1.4h-1.1zM691.40 417.86h1.1v1.4h-1.1zM709.80 32.30h1.1v1.4h-1.1zM709.80 50.66h1.1v1.4h-1.1zM709.80 69.02h1.1v1.4h-1.1zM709.80 87.38h1.1v1.4h-1.1zM709.80 105.74h1.1v1.4h-1.1zM709.80 124.10h1.1v1.4h-1.1zM709.80 142.46h1.1v1.4h-1.1zM709.80 160.82h1.1v1.4h-1.1zM709.80 179.18h1.1v1.4h-1.1zM709.80 197.54h1.1v1.4h-1.1zM709.80 215.90h1.1v1.4h-1.1zM709.80 234.26h1.1v1.4h-1.1zM709.80 252.62h1.1v1.4h-1.1zM709.80 270.98h1.1v1.4h-1.1zM709.80 289.34h1.1v1.4h-1.1zM709.80 307.70h1.1v1.4h-1.1zM709.80 326.06h1.1v1.4h-1.1zM709.80 344.42h1.1v1.4h-1.1zM709.80 362.78h1.1v1.4h-1.1zM709.80 381.14h1.1v1.4h-1.1zM709.80 399.50h1.1v1.4h-1.1zM709.80 417.86h1.1v1.4h-1.1zM728.20 32.30h1.1v1.4h-1.1zM728.20 50.66h1.1v1.4h-1.1zM728.20 69.02h1.1v1.4h-1.1zM728.20 87.38h1.1v1.4h-1.1zM728.20 105.74h1.1v1.4h-1.1zM728.20 124.10h1.1v1.4h-1.1zM728.20 142.46h1.1v1.4h-1.1zM728.20 160.82h1.1v1.4h-1.1zM728.20 179.18h1.1v1.4h-1.1zM728.20 197.54h1.1v1.4h-1.1zM728.20 215.90h1.1v1.4h-1.1zM728.20 234.26h1.1v1.4h-1.1zM728.20 252.62h1.1v1.4h-1.1zM728.20 270.98h1.1v1.4h-1.1zM728.20 289.34h1.1v1.4h-1.1zM728.20 307.70h1.1v1.4h-1.1zM728.20 326.06h1.1v1.4h-1.1zM728.20 344.42h1.1v1.4h-1.1zM728.20 362.78h1.1v1.4h-1.1zM728.20 381.14h1.1v1.4h-1.1zM728.20 399.50h1.1v1.4h-1.1zM728.20 417.86h1.1v1.4h-1.1zM746.60 32.30h1.1v1.4h-1.1zM746.60 50.66h1.1v1.4h-1.1zM746.60 69.02h1.1v1.4h-1.1zM746.60 87.38h1.1v1.4h-1.1zM746.60 105.74h1.1v1.4h-1.1zM746.60 124.10h1.1v1.4h-1.1zM746.60 142.46h1.1v1.4h-1.1zM746.60 160.82h1.1v1.4h-1.1zM746.60 179.18h1.1v1.4h-1.1zM746.60 197.54h1.1v1.4h-1.1zM746.60 215.90h1.1v1.4h-1.1zM746.60 234.26h1.1v1.4h-1.1zM746.60 252.62h1.1v1.4h-1.1zM746.60 270.98h1.1v1.4h-1.1zM746.60 289.34h1.1v1.4h-1.1zM746.60 307.70h1.1v1.4h-1.1zM746.60 326.06h1.1v1.4h-1.1zM746.60 344.42h1.1v1.4h-1.1zM746.60 362.78h1.1v1.4h-1.1zM746.60 381.14h1.1v1.4h-1.1zM746.60 399.50h1.1v1.4h-1.1zM746.60 417.86h1.1v1.4h-1.1zM765.00 32.30h1.1v1.4h-1.1zM765.00 50.66h1.1v1.4h-1.1zM765.00 69.02h1.1v1.4h-1.1zM765.00 87.38h1.1v1.4h-1.1zM765.00 105.74h1.1v1.4h-1.1zM765.00 124.10h1.1v1.4h-1.1zM765.00 142.46h1.1v1.4h-1.1zM765.00 160.82h1.1v1.4h-1.1zM765.00 179.18h1.1v1.4h-1.1zM765.00 197.54h1.1v1.4h-1.1zM765.00 215.90h1.1v1.4h-1.1zM765.00 234.26h1.1v1.4h-1.1zM765.00 252.62h1.1v1.4h-1.1zM765.00 270.98h1.1v1.4h-1.1zM765.00 289.34h1.1v1.4h-1.1zM765.00 307.70h1.1v1.4h-1.1zM765.00 326.06h1.1v1.4h-1.1zM765.00 344.42h1.1v1.4h-1.1zM765.00 362.78h1.1v1.4h-1.1zM765.00 381.14h1.1v1.4h-1.1zM765.00 399.50h1.1v1.4h-1.1zM765.00 417.86h1.1v1.4h-1.1zM783.40 32.30h1.1v1.4h-1.1zM783.40 50.66h1.1v1.4h-1.1zM783.40 69.02h1.1v1.4h-1.1zM783.40 87.38h1.1v1.4h-1.1zM783.40 105.74h1.1v1.4h-1.1zM783.40 124.10h1.1v1.4h-1.1zM783.40 142.46h1.1v1.4h-1.1zM783.40 160.82h1.1v1.4h-1.1zM783.40 179.18h1.1v1.4h-1.1zM783.40 197.54h1.1v1.4h-1.1zM783.40 215.90h1.1v1.4h-1.1zM783.40 234.26h1.1v1.4h-1.1zM783.40 252.62h1.1v1.4h-1.1zM783.40 270.98h1.1v1.4h-1.1zM783.40 289.34h1.1v1.4h-1.1zM783.40 307.70h1.1v1.4h-1.1zM783.40 326.06h1.1v1.4h-1.1zM783.40 344.42h1.1v1.4h-1.1zM783.40 362.78h1.1v1.4h-1.1zM783.40 381.14h1.1v1.4h-1.1zM783.40 399.50h1.1v1.4h-1.1zM783.40 417.86h1.1v1.4h-1.1zM801.80 32.30h1.1v1.4h-1.1zM801.80 50.66h1.1v1.4h-1.1zM801.80 69.02h1.1v1.4h-1.1zM801.80 87.38h1.1v1.4h-1.1zM801.80 105.74h1.1v1.4h-1.1zM801.80 124.10h1.1v1.4h-1.1zM801.80 142.46h1.1v1.4h-1.1zM801.80 160.82h1.1v1.4h-1.1zM801.80 179.18h1.1v1.4h-1.1zM801.80 197.54h1.1v1.4h-1.1zM801.80 215.90h1.1v1.4h-1.1zM801.80 234.26h1.1v1.4h-1.1zM801.80 252.62h1.1v1.4h-1.1zM801.80 270.98h1.1v1.4h-1.1zM801.80 289.34h1.1v1.4h-1.1zM801.80 307.70h1.1v1.4h-1.1zM801.80 326.06h1.1v1.4h-1.1zM801.80 344.42h1.1v1.4h-1.1zM801.80 362.78h1.1v1.4h-1.1zM801.80 381.14h1.1v1.4h-1.1zM801.80 399.50h1.1v1.4h-1.1zM801.80 417.86h1.1v1.4h-1.1zM820.20 32.30h1.1v1.4h-1.1zM820.20 50.66h1.1v1.4h-1.1zM820.20 69.02h1.1v1.4h-1.1zM820.20 87.38h1.1v1.4h-1.1zM820.20 105.74h1.1v1.4h-1.1zM820.20 124.10h1.1v1.4h-1.1zM820.20 142.46h1.1v1.4h-1.1zM820.20 160.82h1.1v1.4h-1.1zM820.20 179.18h1.1v1.4h-1.1zM820.20 197.54h1.1v1.4h-1.1zM820.20 215.90h1.1v1.4h-1.1zM820.20 234.26h1.1v1.4h-1.1zM820.20 252.62h1.1v1.4h-1.1zM820.20 270.98h1.1v1.4h-1.1zM820.20 289.34h1.1v1.4h-1.1zM820.20 307.70h1.1v1.4h-1.1zM820.20 326.06h1.1v1.4h-1.1zM820.20 344.42h1.1v1.4h-1.1zM820.20 362.78h1.1v1.4h-1.1zM820.20 381.14h1.1v1.4h-1.1zM820.20 399.50h1.1v1.4h-1.1zM820.20 417.86h1.1v1.4h-1.1zM838.60 32.30h1.1v1.4h-1.1zM838.60 50.66h1.1v1.4h-1.1zM838.60 69.02h1.1v1.4h-1.1zM838.60 87.38h1.1v1.4h-1.1zM838.60 105.74h1.1v1.4h-1.1zM838.60 124.10h1.1v1.4h-1.1zM838.60 142.46h1.1v1.4h-1.1zM838.60 160.82h1.1v1.4h-1.1zM838.60 179.18h1.1v1.4h-1.1zM838.60 197.54h1.1v1.4h-1.1zM838.60 215.90h1.1v1.4h-1.1zM838.60 234.26h1.1v1.4h-1.1zM838.60 252.62h1.1v1.4h-1.1zM838.60 270.98h1.1v1.4h-1.1zM838.60 289.34h1.1v1.4h-1.1zM838.60 307.70h1.1v1.4h-1.1zM838.60 326.06h1.1v1.4h-1.1zM838.60 344.42h1.1v1.4h-1.1zM838.60 362.78h1.1v1.4h-1.1zM838.60 381.14h1.1v1.4h-1.1zM838.60 399.50h1.1v1.4h-1.1zM838.60 417.86h1.1v1.4h-1.1zM857.00 32.30h1.1v1.4h-1.1zM857.00 50.66h1.1v1.4h-1.1zM857.00 69.02h1.1v1.4h-1.1zM857.00 87.38h1.1v1.4h-1.1zM857.00 105.74h1.1v1.4h-1.1zM857.00 124.10h1.1v1.4h-1.1zM857.00 142.46h1.1v1.4h-1.1zM857.00 160.82h1.1v1.4h-1.1zM857.00 179.18h1.1v1.4h-1.1zM857.00 197.54h1.1v1.4h-1.1zM857.00 215.90h1.1v1.4h-1.1zM857.00 234.26h1.1v1.4h-1.1zM857.00 252.62h1.1v1.4h-1.1zM857.00 270.98h1.1v1.4h-1.1zM857.00 289.34h1.1v1.4h-1.1zM857.00 307.70h1.1v1.4h-1.1zM857.00 326.06h1.1v1.4h-1.1zM857.00 344.42h1.1v1.4h-1.1zM857.00 362.78h1.1v1.4h-1.1zM857.00 381.14h1.1v1.4h-1.1zM857.00 399.50h1.1v1.4h-1.1zM857.00 417.86h1.1v1.4h-1.1zM875.40 32.30h1.1v1.4h-1.1zM875.40 50.66h1.1v1.4h-1.1zM875.40 69.02h1.1v1.4h-1.1zM875.40 87.38h1.1v1.4h-1.1zM875.40 105.74h1.1v1.4h-1.1zM875.40 124.10h1.1v1.4h-1.1zM875.40 142.46h1.1v1.4h-1.1zM875.40 160.82h1.1v1.4h-1.1zM875.40 179.18h1.1v1.4h-1.1zM875.40 197.54h1.1v1.4h-1.1zM875.40 215.90h1.1v1.4h-1.1zM875.40 234.26h1.1v1.4h-1.1zM875.40 252.62h1.1v1.4h-1.1zM875.40 270.98h1.1v1.4h-1.1zM875.40 289.34h1.1v1.4h-1.1zM875.40 307.70h1.1v1.4h-1.1zM875.40 326.06h1.1v1.4h-1.1zM875.40 344.42h1.1v1.4h-1.1zM875.40 362.78h1.1v1.4h-1.1zM875.40 381.14h1.1v1.4h-1.1zM875.40 399.50h1.1v1.4h-1.1zM875.40 417.86h1.1v1.4h-1.1zM893.80 32.30h1.1v1.4h-1.1zM893.80 50.66h1.1v1.4h-1.1zM893.80 69.02h1.1v1.4h-1.1zM893.80 87.38h1.1v1.4h-1.1zM893.80 105.74h1.1v1.4h-1.1zM893.80 124.10h1.1v1.4h-1.1zM893.80 142.46h1.1v1.4h-1.1zM893.80 160.82h1.1v1.4h-1.1zM893.80 179.18h1.1v1.4h-1.1zM893.80 197.54h1.1v1.4h-1.1zM893.80 215.90h1.1v1.4h-1.1zM893.80 234.26h1.1v1.4h-1.1zM893.80 252.62h1.1v1.4h-1.1zM893.80 270.98h1.1v1.4h-1.1zM893.80 289.34h1.1v1.4h-1.1zM893.80 307.70h1.1v1.4h-1.1zM893.80 326.06h1.1v1.4h-1.1zM893.80 344.42h1.1v1.4h-1.1zM893.80 362.78h1.1v1.4h-1.1zM893.80 381.14h1.1v1.4h-1.1zM893.80 399.50h1.1v1.4h-1.1zM893.80 417.86h1.1v1.4h-1.1zM912.20 32.30h1.1v1.4h-1.1zM912.20 50.66h1.1v1.4h-1.1zM912.20 69.02h1.1v1.4h-1.1zM912.20 87.38h1.1v1.4h-1.1zM912.20 105.74h1.1v1.4h-1.1zM912.20 124.10h1.1v1.4h-1.1zM912.20 142.46h1.1v1.4h-1.1zM912.20 160.82h1.1v1.4h-1.1zM912.20 179.18h1.1v1.4h-1.1zM912.20 197.54h1.1v1.4h-1.1zM912.20 215.90h1.1v1.4h-1.1zM912.20 234.26h1.1v1.4h-1.1zM912.20 252.62h1.1v1.4h-1.1zM912.20 270.98h1.1v1.4h-1.1zM912.20 289.34h1.1v1.4h-1.1zM912.20 307.70h1.1v1.4h-1.1zM912.20 326.06h1.1v1.4h-1.1zM912.20 344.42h1.1v1.4h-1.1zM912.20 362.78h1.1v1.4h-1.1zM912.20 381.14h1.1v1.4h-1.1zM912.20 399.50h1.1v1.4h-1.1zM912.20 417.86h1.1v1.4h-1.1zM930.60 32.30h1.1v1.4h-1.1zM930.60 50.66h1.1v1.4h-1.1zM930.60 69.02h1.1v1.4h-1.1zM930.60 87.38h1.1v1.4h-1.1zM930.60 105.74h1.1v1.4h-1.1zM930.60 124.10h1.1v1.4h-1.1zM930.60 142.46h1.1v1.4h-1.1zM930.60 160.82h1.1v1.4h-1.1zM930.60 179.18h1.1v1.4h-1.1zM930.60 197.54h1.1v1.4h-1.1zM930.60 215.90h1.1v1.4h-1.1zM930.60 234.26h1.1v1.4h-1.1zM930.60 252.62h1.1v1.4h-1.1zM930.60 270.98h1.1v1.4h-1.1zM930.60 289.34h1.1v1.4h-1.1zM930.60 307.70h1.1v1.4h-1.1zM930.60 326.06h1.1v1.4h-1.1zM930.60 344.42h1.1v1.4h-1.1zM930.60 362.78h1.1v1.4h-1.1zM930.60 381.14h1.1v1.4h-1.1zM930.60 399.50h1.1v1.4h-1.1zM930.60 417.86h1.1v1.4h-1.1zM949.00 32.30h1.1v1.4h-1.1zM949.00 50.66h1.1v1.4h-1.1zM949.00 69.02h1.1v1.4h-1.1zM949.00 87.38h1.1v1.4h-1.1zM949.00 105.74h1.1v1.4h-1.1zM949.00 124.10h1.1v1.4h-1.1zM949.00 142.46h1.1v1.4h-1.1zM949.00 160.82h1.1v1.4h-1.1zM949.00 179.18h1.1v1.4h-1.1zM949.00 197.54h1.1v1.4h-1.1zM949.00 215.90h1.1v1.4h-1.1zM949.00 234.26h1.1v1.4h-1.1zM949.00 252.62h1.1v1.4h-1.1zM949.00 270.98h1.1v1.4h-1.1zM949.00 289.34h1.1v1.4h-1.1zM949.00 307.70h1.1v1.4h-1.1zM949.00 326.06h1.1v1.4h-1.1zM949.00 344.42h1.1v1.4h-1.1zM949.00 362.78h1.1v1.4h-1.1zM949.00 381.14h1.1v1.4h-1.1zM949.00 399.50h1.1v1.4h-1.1zM949.00 417.86h1.1v1.4h-1.1zM967.40 32.30h1.1v1.4h-1.1zM967.40 50.66h1.1v1.4h-1.1zM967.40 69.02h1.1v1.4h-1.1zM967.40 87.38h1.1v1.4h-1.1zM967.40 105.74h1.1v1.4h-1.1zM967.40 124.10h1.1v1.4h-1.1zM967.40 142.46h1.1v1.4h-1.1zM967.40 160.82h1.1v1.4h-1.1zM967.40 179.18h1.1v1.4h-1.1zM967.40 197.54h1.1v1.4h-1.1zM967.40 215.90h1.1v1.4h-1.1zM967.40 234.26h1.1v1.4h-1.1zM967.40 252.62h1.1v1.4h-1.1zM967.40 270.98h1.1v1.4h-1.1zM967.40 289.34h1.1v1.4h-1.1zM967.40 307.70h1.1v1.4h-1.1zM967.40 326.06h1.1v1.4h-1.1zM967.40 344.42h1.1v1.4h-1.1zM967.40 362.78h1.1v1.4h-1.1zM967.40 381.14h1.1v1.4h-1.1zM967.40 399.50h1.1v1.4h-1.1zM967.40 417.86h1.1v1.4h-1.1zM985.80 32.30h1.1v1.4h-1.1zM985.80 50.66h1.1v1.4h-1.1zM985.80 69.02h1.1v1.4h-1.1zM985.80 87.38h1.1v1.4h-1.1zM985.80 105.74h1.1v1.4h-1.1zM985.80 124.10h1.1v1.4h-1.1zM985.80 142.46h1.1v1.4h-1.1zM985.80 160.82h1.1v1.4h-1.1zM985.80 179.18h1.1v1.4h-1.1zM985.80 197.54h1.1v1.4h-1.1zM985.80 215.90h1.1v1.4h-1.1zM985.80 234.26h1.1v1.4h-1.1zM985.80 252.62h1.1v1.4h-1.1zM985.80 270.98h1.1v1.4h-1.1zM985.80 289.34h1.1v1.4h-1.1zM985.80 307.70h1.1v1.4h-1.1zM985.80 326.06h1.1v1.4h-1.1zM985.80 344.42h1.1v1.4h-1.1zM985.80 362.78h1.1v1.4h-1.1zM985.80 381.14h1.1v1.4h-1.1zM985.80 399.50h1.1v1.4h-1.1zM985.80 417.86h1.1v1.4h-1.1z"/></svg>
<svg style="left:720px;top:126px" width="90" height="50" viewBox="0 0 90 50"><g stroke="#1a1ad0" fill="none" stroke-width="1.4" stroke-linejoin="round"><rect x="26.8" y="8" width="36.8" height="35.3" stroke-width="1.6"/><path d="M8 26H26.8M52.7 25.9H82"/><path d="M12 28.5L17.7 23" stroke-width="1.3"/><path d="M29.9 19.8 C33 15.8 37.5 15.3 41.5 18.3 S49.5 22.5 52.7 18.9"/><path d="M29.9 26.4 C33 22.4 37.5 21.9 41.5 24.9 S49.5 29.1 52.7 25.5"/><path d="M29.9 33.0 C33 29.0 37.5 28.5 41.5 31.5 S49.5 35.7 52.7 32.099999999999994"/><path d="M37.6 36.7L46 27M37 23L45.4 15.8" stroke-width="1.3"/><circle cx="59.3" cy="26" r="1.1" fill="#1a1ad0"/></g><g fill="none" stroke="#f01010" stroke-width="1.2"><path d="M8.4 22.5L11.9 26L8.4 29.5L4.9 26Z"/><path d="M82.4 22.5L85.9 26L82.4 29.5L78.9 26Z"/></g><rect x="6.9" y="24.5" width="3" height="3" fill="#f01010"/><rect x="80.9" y="24.5" width="3" height="3" fill="#f01010"/></svg>
<div class="t" style="left:743.00px;top:176.22px;font-size:12.5px;color:#3a9af0;">idt</div>
<div class="t" style="left:743.00px;top:191.38px;font-size:12.5px;color:#2a2ae8;">i2</div>
<div class="t" style="left:743.00px;top:206.54px;font-size:12.5px;color:#2626a0;">layer1="M1:drawing"</div>
<div class="t" style="left:743.00px;top:221.70px;font-size:12.5px;color:#2626a0;">layer2="IS:drawing"</div>
<div class="t" style="left:743.00px;top:236.86px;font-size:12.5px;color:#2626a0;">IDT_N=50</div>
<div class="t" style="left:743.00px;top:252.02px;font-size:12.5px;color:#2626a0;">Bragg_N=10</div>
<div class="t" style="left:743.00px;top:267.18px;font-size:12.5px;color:#2626a0;">p=0.8 um</div>
<div class="t" style="left:743.00px;top:282.34px;font-size:12.5px;color:#2626a0;">ratio=0.5</div>
<div class="t" style="left:743.00px;top:297.50px;font-size:12.5px;color:#2626a0;">w=20 um</div>
<div class="t" style="left:743.00px;top:312.66px;font-size:12.5px;color:#2626a0;">SN=2</div>
<div class="t" style="left:743.00px;top:327.82px;font-size:12.5px;color:#2626a0;">Theta=30</div>
<div class="t" style="left:743.00px;top:342.98px;font-size:12.5px;color:#2626a0;">type=0</div>
</body></html>
